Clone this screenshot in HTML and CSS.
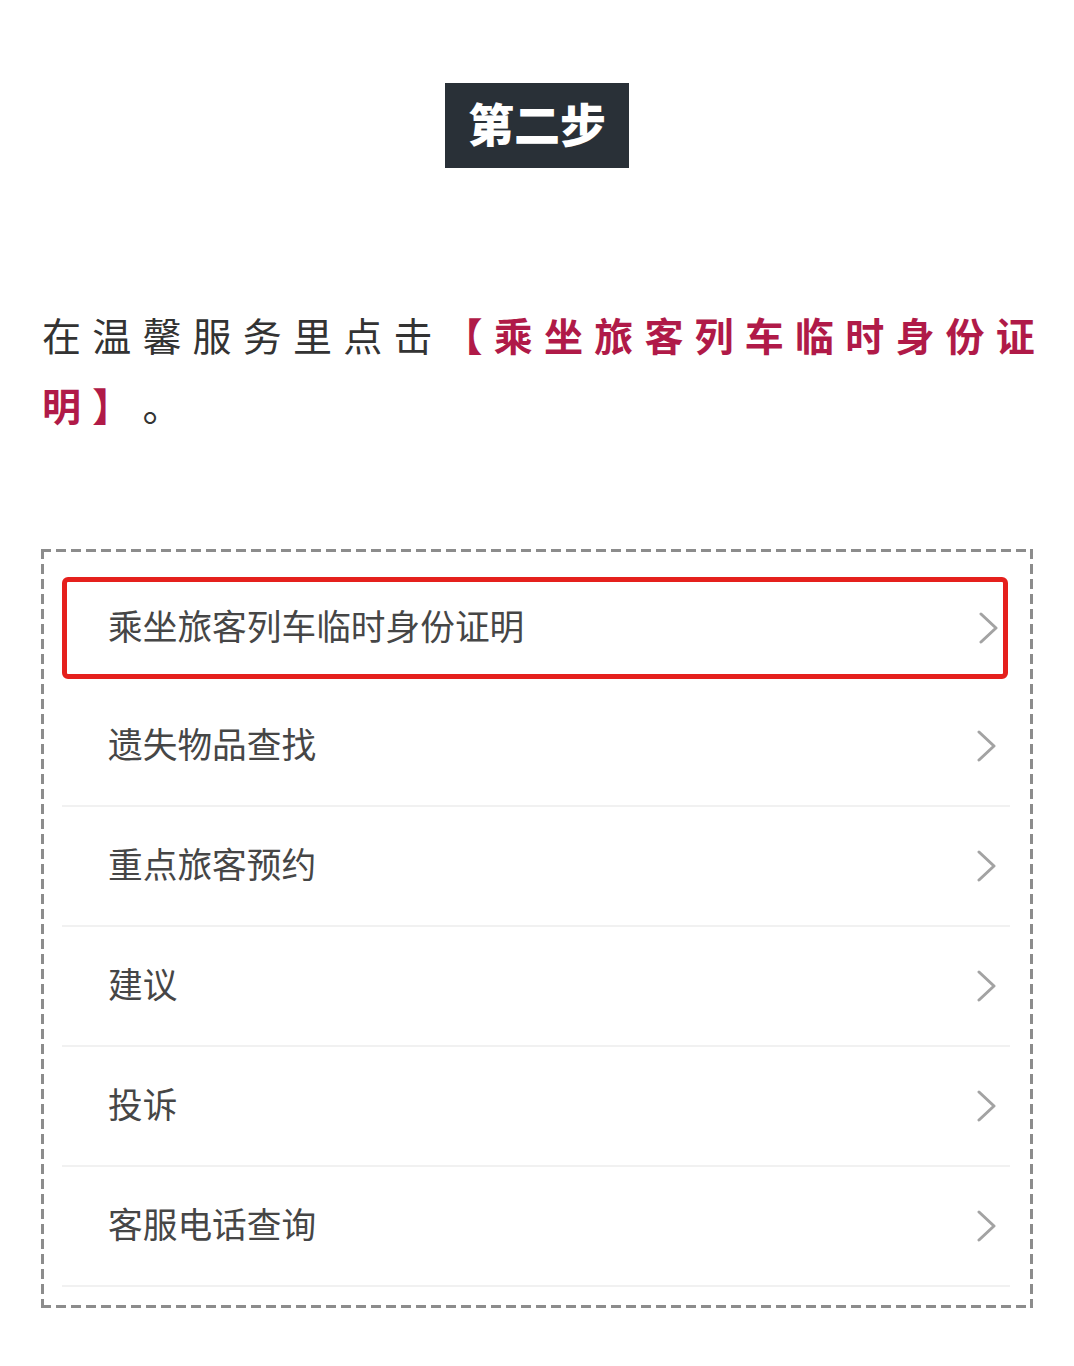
FILE: index.html
```html
<!DOCTYPE html>
<html lang="zh-CN">
<head>
<meta charset="utf-8">
<title>第二步</title>
<link rel="stylesheet" href="styles.css">
</head>
<body>
<div class="page">
  <div class="step-wrap">
    <div class="step">第二步</div>
  </div>
  <p class="desc">在温馨服务里点击<span class="hl">【乘坐旅客列车临时身份证明】</span>。</p>
  <div class="panel">
    <ul class="list">
      <li class="row row-active"><span class="label">乘坐旅客列车临时身份证明</span><svg class="chev" viewBox="0 0 20 32" width="20" height="32"><polyline points="3,2 18,16 3,30"/></svg></li>
      <li class="row"><span class="label">遗失物品查找</span><svg class="chev" viewBox="0 0 20 32" width="20" height="32"><polyline points="3,2 18,16 3,30"/></svg></li>
      <li class="row"><span class="label">重点旅客预约</span><svg class="chev" viewBox="0 0 20 32" width="20" height="32"><polyline points="3,2 18,16 3,30"/></svg></li>
      <li class="row"><span class="label">建议</span><svg class="chev" viewBox="0 0 20 32" width="20" height="32"><polyline points="3,2 18,16 3,30"/></svg></li>
      <li class="row"><span class="label">投诉</span><svg class="chev" viewBox="0 0 20 32" width="20" height="32"><polyline points="3,2 18,16 3,30"/></svg></li>
      <li class="row"><span class="label">客服电话查询</span><svg class="chev" viewBox="0 0 20 32" width="20" height="32"><polyline points="3,2 18,16 3,30"/></svg></li>
    </ul>
  </div>
</div>
</body>
</html>
```

FILE: styles.css
```css
html, body {
  margin: 0;
  padding: 0;
  background: #ffffff;
}
body {
  font-family: "Noto Sans CJK SC", "Noto Sans", sans-serif;
  color: #333;
}
.page {
  width: 1074px;
  height: 1366px;
  padding-top: 83px;
  box-sizing: border-box;
}
.step-wrap {
  display: flex;
  justify-content: center;
}
.step {
  background: #293037;
  color: #ffffff;
  font-size: 46px;
  font-weight: 900;
  height: 85px;
  width: 184px;
  box-sizing: border-box;
  padding-bottom: 8px;
  display: flex;
  align-items: center;
  justify-content: center;
  line-height: 1;
}
.desc {
  margin: 131px 0 0 42px;
  width: 1014px;
  font-size: 39px;
  letter-spacing: 11.2px;
  line-height: 70px;
  color: #333333;
  text-spacing-trim: space-all;
}
.hl {
  color: #b01a48;
  font-weight: 700;
}
.panel {
  margin: 110px 0 0 41px;
  width: 992px;
  box-sizing: border-box;
  padding: 18px 23px 21px 21px;
  background:
    repeating-linear-gradient(90deg, #8c8c8c 0 10px, transparent 10px 15px) left top / 100% 3px no-repeat,
    repeating-linear-gradient(90deg, #8c8c8c 0 10px, transparent 10px 15px) left bottom / 100% 3px no-repeat,
    repeating-linear-gradient(180deg, #8c8c8c 0 10px, transparent 10px 15px) left top / 3px 100% no-repeat,
    repeating-linear-gradient(180deg, #8c8c8c 0 10px, transparent 10px 15px) right top / 3px 100% no-repeat;
}
.list {
  list-style: none;
  margin: 0;
  padding: 0;
}
.row {
  height: 120px;
  box-sizing: border-box;
  display: flex;
  align-items: center;
  justify-content: space-between;
  padding: 0 14px 0 46px;
  border-bottom: 2px solid #f1f1f1;
}
.row-active {
  height: 102px;
  margin: 10px 2px 8px 0;
  border: 5px solid #e5201d;
  border-radius: 6px;
  padding: 0 5px 0 41px;
}
.label {
  font-size: 34.7px;
  color: #464646;
  line-height: 1;
  padding-bottom: 5px;
}
.chev {
  display: block;
}
.chev polyline {
  fill: none;
  stroke: #a3a3a3;
  stroke-width: 3;
  stroke-linecap: round;
  stroke-linejoin: round;
}
```
